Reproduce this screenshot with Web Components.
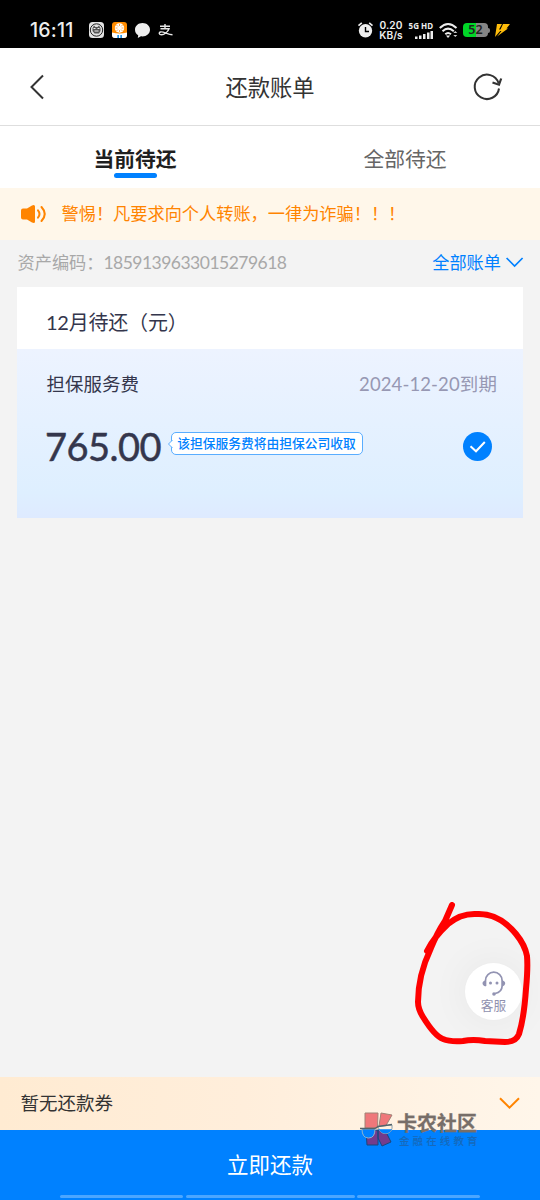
<!DOCTYPE html>
<html lang="zh-CN">
<head>
<meta charset="utf-8">
<title>还款账单</title>
<style>
html,body{margin:0;padding:0}
body{width:540px;height:1200px;overflow:hidden;background:#f3f3f3;font-family:Lato,"Noto Sans CJK SC",sans-serif;text-spacing-trim:space-all}
</style>
</head>
<body>
<repay-page></repay-page>
<script>
function define(name, html){
  const t=document.createElement('template');
  t.innerHTML='<style>*{box-sizing:border-box}svg{display:block;flex:none;overflow:visible}</style>'+html;
  customElements.define(name,class extends HTMLElement{
    constructor(){super();this.attachShadow({mode:'open'}).appendChild(t.content.cloneNode(true));}
  });
}

define('status-bar',`
<style>
:host{display:flex;box-sizing:border-box;height:48px;background:#000;color:#eee;padding:12px 30px 0 30px;align-items:center;font-family:Inter,sans-serif}
.time{font-size:19.500px;font-weight:500;letter-spacing:.2px;line-height:24px;width:51px;white-space:nowrap}
.left,.right{display:flex;align-items:center}
.left{gap:8px}.right{margin-left:auto}
.speed{font:600 10.200px/10px Inter,sans-serif;text-align:center;width:26px;margin-left:5px;white-space:nowrap;display:flex;flex-direction:column;align-items:center;gap:.5px}
.net{width:26px;margin-left:3px;display:flex;flex-direction:column;align-items:flex-end;gap:1px}
.net span{font:700 8px/9px "Noto Sans",sans-serif;white-space:nowrap}
.bat{width:25px;height:14px;border-radius:4px;background:linear-gradient(90deg,#00d627 52%,#858585 52%);color:#222;font:600 12.500px/14px "Noto Sans",sans-serif;text-align:center;margin-left:5px}
.nub{width:2px;height:5px;background:#858585;border-radius:0 2px 2px 0;margin-right:5px}
</style>
<div class="left"><span class="time">16:11</span>
<svg width="15" height="16" viewBox="0 0 15 16"><rect width="15" height="16" rx="3.5" fill="#e4e4e4"/><circle cx="7.5" cy="8" r="6.2" fill="none" stroke="#222" stroke-width="1"/><path d="M3.5 9V6l1.5-2.5L6.5 5h2L10 3.500 11.500 6v3L10 11.500H5.500z" fill="#555"/><path d="M4.500 6.500h2m2 0h2M5.500 9h4" stroke="#eee"/></svg>
<svg width="15" height="16" viewBox="0 0 15 16"><rect width="15" height="16" rx="3" fill="#ff8c00"/><path d="M0 10.500q3.500 1 7.500 1t7.500-1v2.500q0 3-3 3H3q-3 0-3-3z" fill="#fff"/><circle cx="7.500" cy="6" r="4.700" fill="#fff"/><path d="M3.500 6h2m4 0h2M7.500 2v2m0 4v2M4.500 3l1.500 1.500m3 3l1.500 1.500m0-6L9 4.500m-3 3L4.500 9" stroke="#ff9c2a" stroke-width=".8"/><path d="M5.300 13h1.700v3H5.300zM8.300 13H10v3H8.300z" fill="#2595e9"/></svg>
<svg width="15" height="15" viewBox="0 0 15 15"><path d="M7.500 0C3.200 0 0 2.900 0 6.700c0 2.400 1.200 4.400 3.200 5.600L2.800 15l3.100-1.700c4.900.8 9.100-2.400 9.100-6.600C15 2.900 11.800 0 7.500 0z" fill="#eee"/></svg>
<svg width="15" height="12" viewBox="0 0 15 12" fill="none" stroke="#e8e8e8" stroke-width="1.400"><path d="M2 2.300h10M7 0v4.800M2.500 4.800h8.500C10 8 6 10.800 3.500 10.800 1 10.800 .500 8.500 2.500 8c3-.7 7 2.500 12 2.800"/></svg>
</div>
<div class="right">
<svg width="15" height="16" viewBox="0 0 15 16"><circle cx="7.500" cy="8.800" r="6.700" fill="#eee"/><path d="M.5 3.600L3.800.9M14.500 3.600L11.200.9" stroke="#eee" stroke-width="1.700"/><path d="M7.500 5v4.500h3.500" fill="none" stroke="#000" stroke-width="1.400"/></svg>
<div class="speed"><span>0.20</span><span>KB/s</span></div>
<div class="net"><span>5G HD</span><svg width="18" height="8" viewBox="0 0 18 8" fill="#eee"><path d="M0 5.500h2.500V8H0zM4 4.500h2.500V8H4zM8 3h2.500v5H8zM12 1.500h2.500V8H12zM15.500 0H18v8h-2.500z"/></svg></div>
<svg width="19" height="15" viewBox="0 0 19 15" style="margin-left:6px"><g fill="none" stroke="#eee" stroke-width="2"><path d="M.8 5Q9 -3 17.500 5M3.500 8.200Q9 3 14.800 8.200M6.300 11.200Q9 8.700 12 11.200"/></g><path d="M7 12.500h4.200L9 15z" fill="#eee"/><path d="M16.300 8l2 2h-4zM14.300 12h4l-2 2z" fill="#ccc"/></svg>
<div class="bat">52</div><div class="nub"></div>
<svg width="15" height="13" viewBox="0 0 15 13"><path d="M2 0h5L4 5.500h2.500L0 13zM8 0h7l-3.500 4.500h1.500L2 12.500 6.500 7H4.800z" fill="#ffbd0a"/></svg>
</div>`);

define('nav-bar',`
<style>
:host{display:grid;box-sizing:border-box;grid-template-columns:60px 1fr 60px;height:78px;align-items:center;background:#fff;border-bottom:1px solid #dedede;color:#333}
h1{margin:0;font-size:22.3px;line-height:32px;font-weight:400;text-align:center;padding-top:3px;white-space:nowrap}
.back{margin-left:29px}.refresh{margin-left:-7px}
</style>
<svg class="back" width="16" height="26" viewBox="0 0 16 26"><path d="M14 1.500L2.500 13 14 24.500" fill="none" stroke="#333" stroke-width="2"/></svg>
<h1><slot></slot></h1>
<svg class="refresh" width="28" height="28" viewBox="0 0 28 28" fill="none" stroke="#333" stroke-width="2"><path d="M26 15.500A12.200 12.200 0 1 1 25.500 10"/><path d="M19.500 9.500L26 11.700 28.200 5.500" stroke-width="2.200"/></svg>`);

define('tab-bar',`
<style>
:host{display:grid;grid-template-columns:1fr 1fr;height:62px;background:#fff}
div{display:flex;flex-direction:column;align-items:center;padding-top:17.500px;font-size:20.8px;line-height:29px;color:#666;white-space:nowrap}
.on{color:#1f1f1f;font-weight:700}
.on:after{content:"";width:43px;height:5px;border-radius:3px;background:#0081ff;margin-top:.5px}
</style><div class="on"><slot name="current"></slot></div><div><slot name="all"></slot></div>`);

define('fraud-notice',`
<style>
:host{display:flex;height:52px;align-items:center;background:#fff7ea;color:#ff8400;padding-left:21px;font-size:17.2px;white-space:nowrap}
span{margin-left:14.500px;line-height:24px}
</style>
<svg width="26" height="18" viewBox="0 0 26 18"><path d="M2 3.500h4L11 .4Q14 -.8 14 1.500v15q0 2.300-3 1.100l-5-3.100H2q-2 0-2-2v-7q0-2 2-2z" fill="#ff8400"/><path d="M17 5.300q3 3.700 0 7.400M20.500 2q6.500 7 0 14" fill="none" stroke="#ff8400" stroke-width="2" stroke-linecap="round"/></svg>
<span><slot></slot></span>`);

define('asset-row',`
<style>
:host{display:flex;box-sizing:border-box;justify-content:space-between;align-items:center;height:46.600px;padding:0 17px 1px 17.500px;font-size:17.200px;color:#a8a8a8;white-space:nowrap;line-height:24px}
.n{font-size:17.500px;letter-spacing:-.52px}
.f{display:flex;align-items:center;gap:5px;color:#0081ff}
.f svg{margin-top:-2px}
</style><div><slot name="label"></slot><span class="n"><slot name="number"></slot></span></div>
<div class="f"><slot name="filter"></slot><svg width="17" height="10" viewBox="0 0 17 10"><path d="M.6 1l8 8 8-8" fill="none" stroke="#0081ff" stroke-width="1.700"/></svg></div>`);

define('fee-tag',`
<style>
:host{display:flex;box-sizing:border-box;position:relative;width:192px;height:23px;align-items:center;justify-content:center;border:1px solid #59adff;border-radius:5px;background:#fff;color:#0081ff;font-size:12.760px;font-weight:500;line-height:20px;white-space:nowrap;padding:0 2px 1px 0}
svg{position:absolute;left:-4px;top:7px}
</style><svg width="5" height="8" viewBox="0 0 5 8"><path d="M4.500 0L.5 4l4 4" fill="#fff" stroke="#59adff"/></svg><slot></slot>`);

define('bill-card',`
<style>
:host{display:block;margin:0 17px 0 17.400px;color:#34364c}
header{height:62px;background:#fff;padding:20px 28.500px 0;font-size:20px;line-height:30px;white-space:nowrap;letter-spacing:-.2px}
.b{height:169.500px;background:linear-gradient(180deg,#edf3ff 0%,#deefff 85%,#deeaff 100%);padding:21.500px 26px 0 29px}
.r{display:flex;justify-content:space-between;align-items:center}
.name{font-size:18.500px;line-height:28px;white-space:nowrap}
.date{font-size:18.500px;line-height:28px;color:#9798b3;letter-spacing:.11px;white-space:nowrap}
.m{display:flex;align-items:center;margin-top:23.500px;height:50px;padding-right:5px}
.money{font-size:38px;font-weight:400;line-height:48px;height:50px;width:126.500px;letter-spacing:-.5px;margin-left:-1.500px;white-space:nowrap;-webkit-text-stroke:.5px #34364c}
fee-tag{margin-top:-6px}.ok{margin-left:auto}
</style><header><slot name="month"></slot></header><div class="b"><div class="r"><span class="name"><slot name="name"></slot></span><span class="date"><slot name="date"></slot></span></div>
<div class="m"><div class="money"><slot name="money"></slot></div><fee-tag><slot name="tag"></slot></fee-tag><svg class="ok" width="29" height="29" viewBox="0 0 29 29"><circle cx="14.500" cy="14.500" r="14.500" fill="#0081ff"/><path d="M7.500 14.300l5.500 5L21.800 10" fill="none" stroke="#fff" stroke-width="2"/></svg></div></div>`);

define('service-button',`
<style>
:host{display:flex;box-sizing:border-box;flex-direction:column;align-items:center;width:57px;height:57px;border-radius:50%;background:#fff;box-shadow:0 0 42px rgba(0,0,0,.06);color:#8f90ae;font-size:12.700px;line-height:18px;padding-top:8px;white-space:nowrap}
span{margin-top:-.5px}
</style><svg width="24" height="25" viewBox="0 0 24 25" fill="none" stroke="#9293b2"><path d="M3.500 15V9.500a8.300 8.300 0 0 1 16.600 0V15q0 6-7 7.500" stroke-width="1.700"/><path d="M3.700 9.500Q.5 10 .5 12.300T3.700 15.500zM20 9.500q3.200.5 3.200 2.800t-3.200 3.200z" fill="#9293b2" stroke="none"/><g fill="#9293b2" stroke="none"><circle cx="8.500" cy="12" r="1.500"/><circle cx="15" cy="12" r="1.500"/><circle cx="12" cy="23" r="1.800"/></g></svg><span><slot></slot></span>`);

define('coupon-row',`
<style>
:host{display:flex;box-sizing:border-box;height:52.500px;align-items:center;justify-content:space-between;background:linear-gradient(90deg,#ffebd2,#ffeedb 45%,#fff6ea);padding:0 20px 1px 20.500px;font-size:18.500px;line-height:28px;color:#333;white-space:nowrap}
svg{margin-right:.5px}
</style><slot></slot><svg width="21" height="12" viewBox="0 0 21 12"><path d="M1 1.200l9.500 9.500L20 1.200" fill="none" stroke="#ff8400" stroke-width="2"/></svg>`);

define('pay-button',`
<style>
:host{display:flex;box-sizing:border-box;flex-direction:column;height:70.500px;background:#0081ff;color:#fff;font-size:21.500px;line-height:32px;padding-top:19px;align-items:center;white-space:nowrap}
.g{display:grid;grid-template-columns:123px 169px 123px;gap:2.500px;margin-top:14px}
.g i{height:3.500px;background:#4ba6ff;border-radius:2px}
</style><span><slot></slot></span><div class="g"><i></i><i></i><i></i></div>`);

define('water-mark',`
<style>
:host{display:flex;gap:3px;width:119px;height:37px;align-items:flex-start}
.t{display:flex;flex-direction:column;white-space:nowrap}
b{font-size:20px;font-weight:700;line-height:23px;color:#776e69;-webkit-text-stroke:.3px #776e69}
small{font-size:10.500px;font-weight:500;line-height:12px;letter-spacing:3.100px;color:#1669bb;margin:0 0 0 2px}
</style>
<svg width="34" height="36" viewBox="0 0 34 36" stroke-linejoin="round"><path d="M5 1h13l-.5 15H5zM21 1l11 2-8 14-5-3z" fill="#ef777a" stroke="#a08276"/><path d="M6 19l12-1v15H7zM18 18l6-2 7 14-9 4-4-8z" fill="#733c8c" stroke="#17487f"/><path d="M2 17h13q0 9-6.500 9T2 17z" fill="#0081ff" stroke="#8fb4cc"/><path d="M18 14.500l14-1.500q1 7-5 8.500-7 1-9-7z" fill="#fff1e0" stroke="#8fa4ac"/><path d="M18.600 17.200H31.800q-1.500 3.500-4.800 4.100-5.500.7-8.400-4.100z" fill="#0081ff"/><path d="M0 16.500h15l3-2 14-2" fill="none" stroke="#54636b" stroke-width="1.300"/></svg>
<div class="t"><b><slot name="title"></slot></b><small><slot name="sub"></slot></small></div>`);

define('red-mark',`
<style>:host{display:block;width:140px;height:170px;pointer-events:none}</style>
<svg width="140" height="170" viewBox="0 0 140 170"><path d="M52 15L45 31Q37 43 31 58C22 77 18 96 18 112Q18 119 23 127C31 140 37 147 43 149Q50 152 63 151Q73 149 85 151L105 152Q116 152 119 144Q124 128 126 99Q128 78 127 66Q125 55 116 44Q99 23 77 24Q61 23 48 34Q34 47 27 61M52 15L43 36" fill="none" stroke="#f00" stroke-width="6" stroke-linejoin="round" stroke-linecap="round"/></svg>`);

define('repay-page',`
<style>
:host{display:flex;flex-direction:column;position:relative;width:540px;height:1200px;background:#f3f3f3;overflow:hidden}
.space{flex:1}
service-button{position:absolute;left:465px;top:963px}
water-mark{position:absolute;left:360px;top:1112px}
red-mark{position:absolute;left:400px;top:890px}
</style>
<status-bar></status-bar>
<nav-bar>还款账单</nav-bar>
<tab-bar><span slot="current">当前待还</span><span slot="all">全部待还</span></tab-bar>
<fraud-notice>警惕！凡要求向个人转账，一律为诈骗！！！</fraud-notice>
<asset-row><span slot="label">资产编码：</span><span slot="number">1859139633015279618</span><span slot="filter">全部账单</span></asset-row>
<bill-card><span slot="month">12月待还（元）</span><span slot="name">担保服务费</span><span slot="date">2024-12-20到期</span><span slot="money">765.00</span><span slot="tag">该担保服务费将由担保公司收取</span></bill-card>
<div class="space"></div>
<coupon-row>暂无还款券</coupon-row>
<pay-button>立即还款</pay-button>
<service-button>客服</service-button>
<water-mark><span slot="title">卡农社区</span><span slot="sub">金融在线教育</span></water-mark>
<red-mark></red-mark>`);
</script>
</body>
</html>
